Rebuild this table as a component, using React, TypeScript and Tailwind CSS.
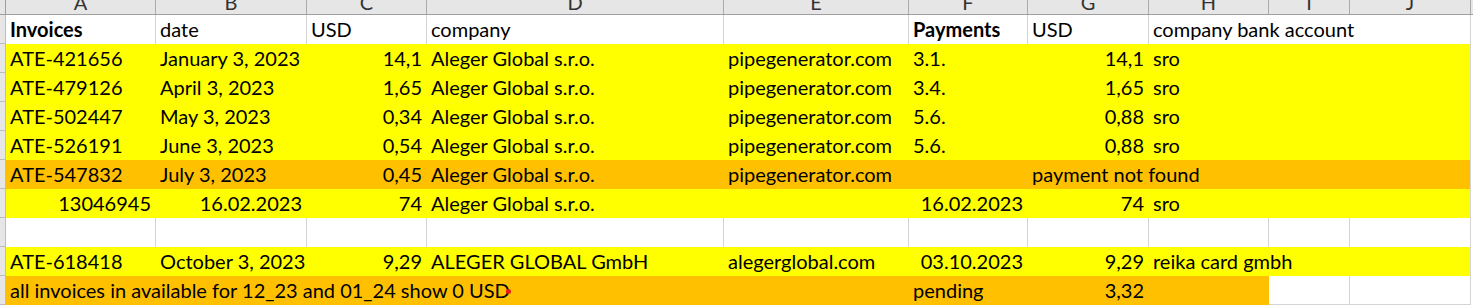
import React from "react";

type Cell = {
  w: string;
  text?: string;
  right?: boolean;
  bold?: boolean;
  bg?: "y" | "o" | "w";
  last?: boolean;
  bottom?: boolean;
  dot?: boolean;
};

const headers = [
  { l: "A", w: "w-[150px]" },
  { l: "B", w: "w-[151px]" },
  { l: "C", w: "w-[120px]" },
  { l: "D", w: "w-[297px]" },
  { l: "E", w: "w-[185px]" },
  { l: "F", w: "w-[119px]" },
  { l: "G", w: "w-[121px]" },
  { l: "H", w: "w-[120px]" },
  { l: "I", w: "w-[81px]" },
  { l: "J", w: "w-[120px]" },
];

const yellowRow = (
  id: string,
  date: string,
  usd: string,
  pay: string,
  usd2: string
): Cell[] => [
  { w: "w-[150px]", text: id, bg: "y" },
  { w: "w-[151px]", text: date, bg: "y" },
  { w: "w-[120px]", text: usd, right: true, bg: "y" },
  { w: "w-[297px]", text: "Aleger Global s.r.o.", bg: "y" },
  { w: "w-[185px]", text: "pipegenerator.com", bg: "y" },
  { w: "w-[119px]", text: pay, bg: "y" },
  { w: "w-[121px]", text: usd2, right: true, bg: "y" },
  { w: "w-[321px]", text: "sro", bg: "y", last: true },
];

const rows: Cell[][] = [
  [
    { w: "w-[150px]", text: "Invoices", bold: true },
    { w: "w-[151px]", text: "date" },
    { w: "w-[120px]", text: "USD" },
    { w: "w-[297px]", text: "company" },
    { w: "w-[185px]" },
    { w: "w-[119px]", text: "Payments", bold: true },
    { w: "w-[121px]", text: "USD" },
    { w: "w-[321px]", text: "company bank account", last: true },
  ],
  yellowRow("ATE-421656", "January 3, 2023", "14,1", "3.1.", "14,1"),
  yellowRow("ATE-479126", "April 3, 2023", "1,65", "3.4.", "1,65"),
  yellowRow("ATE-502447", "May 3, 2023", "0,34", "5.6.", "0,88"),
  yellowRow("ATE-526191", "June 3, 2023", "0,54", "5.6.", "0,88"),
  [
    { w: "w-[150px]", text: "ATE-547832", bg: "o" },
    { w: "w-[151px]", text: "July 3, 2023", bg: "o" },
    { w: "w-[120px]", text: "0,45", right: true, bg: "o" },
    { w: "w-[297px]", text: "Aleger Global s.r.o.", bg: "o" },
    { w: "w-[185px]", text: "pipegenerator.com", bg: "o" },
    { w: "w-[119px]", bg: "o" },
    { w: "w-[442px]", text: "payment not found", bg: "o", last: true },
  ],
  [
    { w: "w-[150px]", text: "13046945", right: true, bg: "y" },
    { w: "w-[151px]", text: "16.02.2023", right: true, bg: "y" },
    { w: "w-[120px]", text: "74", right: true, bg: "y" },
    { w: "w-[297px]", text: "Aleger Global s.r.o.", bg: "y" },
    { w: "w-[185px]", bg: "y" },
    { w: "w-[119px]", text: "16.02.2023", right: true, bg: "y" },
    { w: "w-[121px]", text: "74", right: true, bg: "y" },
    { w: "w-[321px]", text: "sro", bg: "y", last: true },
  ],
  headers.map((h, i) => ({ w: h.w, last: i === 9 })),
  [
    { w: "w-[150px]", text: "ATE-618418", bg: "y" },
    { w: "w-[151px]", text: "October 3, 2023", bg: "y" },
    { w: "w-[120px]", text: "9,29", right: true, bg: "y" },
    { w: "w-[297px]", text: "ALEGER GLOBAL GmbH", bg: "y" },
    { w: "w-[185px]", text: "alegerglobal.com", bg: "y" },
    { w: "w-[119px]", text: "03.10.2023", right: true, bg: "y" },
    { w: "w-[121px]", text: "9,29", right: true, bg: "y" },
    { w: "w-[321px]", text: "reika card gmbh", bg: "y", last: true },
  ],
  [
    {
      w: "w-[903px]",
      text: "all invoices in available for 12_23 and 01_24 show 0 USD",
      bg: "o",
      dot: true,
    },
    { w: "w-[119px]", text: "pending", bg: "o" },
    { w: "w-[121px]", text: "3,32", right: true, bg: "o" },
    { w: "w-[120px]", bg: "o" },
    { w: "w-[81px]", bottom: true },
    { w: "w-[120px]", bottom: true, last: true },
  ],
];

function cellClass(c: Cell) {
  const base = "shrink-0 h-full whitespace-nowrap overflow-visible px-[4px]";
  let color = "bg-white border-[#d4d4d4]";
  if (c.bg === "y") color = "bg-[#ffff00] border-[#ffff00]";
  if (c.bg === "o") color = "bg-[#ffc000] border-[#ffc000]";
  return [
    base,
    c.w,
    color,
    c.last ? "" : "border-r",
    c.bottom ? "border-b border-b-[#d4d4d4]" : "",
    c.right ? "text-right" : "text-left",
    c.bold ? "font-bold" : "",
  ].join(" ");
}

export default function App() {
  return (
    <div className="w-[1473px] h-[307px] overflow-hidden bg-white text-black font-[Lato,sans-serif] text-[20px]">
      {/* column letters */}
      <div className="flex h-[15px] bg-[#e6e6e6] border-b border-[#9e9e9e] overflow-hidden">
        <div className="w-[6px] shrink-0 border-r border-[#9e9e9e]" />
        {headers.map((h, i) => (
          <div
            key={h.l}
            className={`${h.w} shrink-0 text-center text-[#333] leading-[20px] ${
              i === 9 ? "" : "border-r border-[#ababab]"
            }`}
          >
            <div className="-mt-[8px]">{h.l}</div>
          </div>
        ))}
        <div className="w-[3px] shrink-0 border-l border-[#ababab]" />
      </div>

      {rows.map((row, ri) => (
        <div key={ri} className="flex h-[29px] leading-[29px]">
          <div className="w-[6px] shrink-0 bg-[#e6e6e6] border-r border-b border-[#bdbdbd]" />
          {row.map((c, ci) => (
            <div key={ci} className={cellClass(c)}>
              {c.text}
              {c.dot && (
                <span className="inline-block w-[5px] h-[5px] -ml-[4px] mb-[4px] rounded-full bg-[#e8191b]" />
              )}
            </div>
          ))}
          <div className="w-[3px] shrink-0 bg-white border-l border-[#d4d4d4]" />
        </div>
      ))}
    </div>
  );
}
